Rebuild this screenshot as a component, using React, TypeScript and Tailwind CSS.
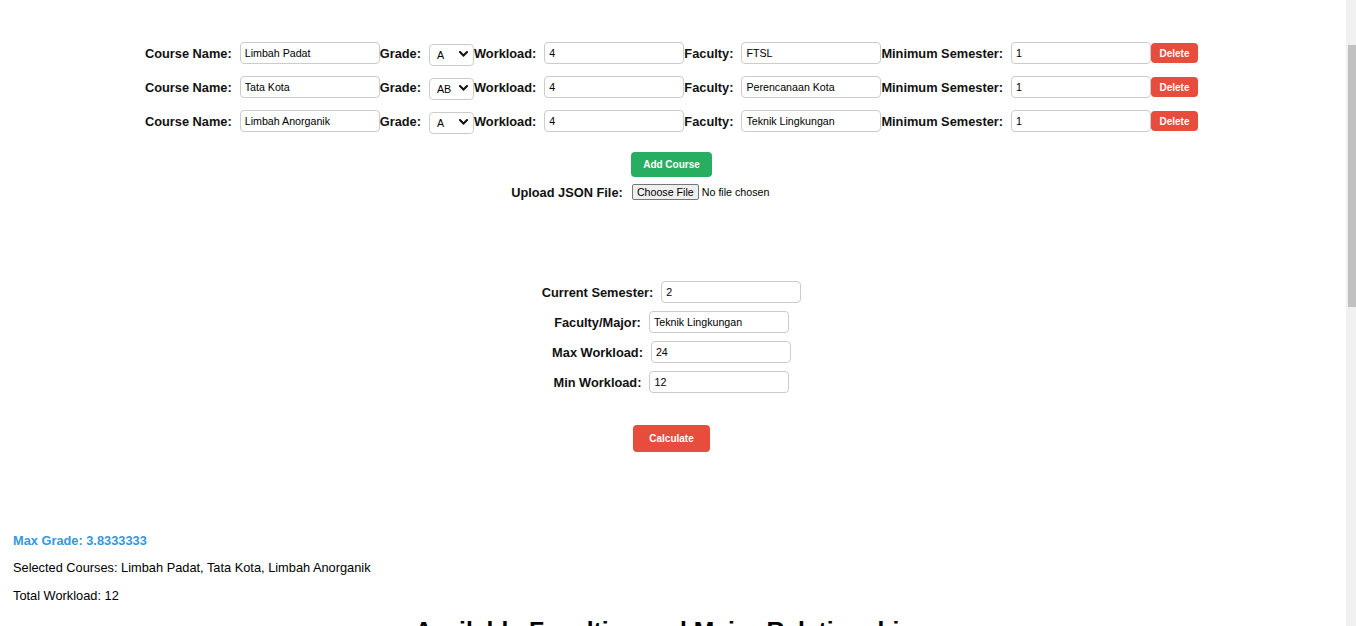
import React from "react";

const inputCls =
  "w-[140px] h-[22px] border border-[#cccccc] rounded-[4px] pl-[4px] text-[10.67px] text-black bg-white outline-none";

function Label({ children }: { children: React.ReactNode }) {
  return <label className="mr-2 text-[12.8px] font-bold text-[#111] whitespace-nowrap leading-[15px] -translate-y-[0.5px]">{children}</label>;
}

function GradeSelect({ value }: { value: string }) {
  return (
    <div className="relative w-[45px] h-[22px]">
      <select
        defaultValue={value}
        className="appearance-none w-[45px] h-[22px] border border-[#cccccc] rounded-[4px] pl-[7px] text-[10.67px] text-black bg-white outline-none"
      >
        {["A", "AB", "B", "BC", "C", "D", "E"].map((g) => (
          <option key={g} value={g}>
            {g}
          </option>
        ))}
      </select>
      <svg
        className="pointer-events-none absolute right-[6px] top-[9px]"
        width="9"
        height="6"
        viewBox="0 0 9 6"
      >
        <path d="M1 1 L4.5 4.5 L8 1" fill="none" stroke="#111" strokeWidth="2" strokeLinecap="square" />
      </svg>
    </div>
  );
}

const courses = [
  { name: "Limbah Padat", grade: "A", workload: "4", faculty: "FTSL", min: "1" },
  { name: "Tata Kota", grade: "AB", workload: "4", faculty: "Perencanaan Kota", min: "1" },
  { name: "Limbah Anorganik", grade: "A", workload: "4", faculty: "Teknik Lingkungan", min: "1" },
];

function CourseRow({ c }: { c: (typeof courses)[number] }) {
  return (
    <div className="flex items-center h-[22px]">
      <Label>Course Name:</Label>
      <input className={inputCls} defaultValue={c.name} />
      <Label>Grade:</Label>
      <GradeSelect value={c.grade} />
      <Label>Workload:</Label>
      <input className={inputCls} defaultValue={c.workload} />
      <Label>Faculty:</Label>
      <input className={inputCls} defaultValue={c.faculty} />
      <Label>Minimum Semester:</Label>
      <input className={inputCls} defaultValue={c.min} />
      <button className="w-[47px] h-[20px] bg-[#e74c3c] text-white text-[10px] font-bold rounded-[4px] flex items-center justify-center">
        Delete
      </button>
    </div>
  );
}

function FieldRow({ label, value }: { label: string; value: string }) {
  return (
    <div className="flex items-center h-[22px]">
      <Label>{label}</Label>
      <input className={inputCls} defaultValue={value} />
    </div>
  );
}

export default function App() {
  return (
    <div className="w-[1356px] h-[626px] flex overflow-hidden bg-white font-['Liberation_Sans',Arial,sans-serif] text-[#111]">
      <div className="flex-1 flex flex-col pr-[3px]">
        <div className="shrink-0 flex flex-col items-center gap-[12px] mt-[42px]">
          {courses.map((c, i) => (
            <CourseRow key={i} c={c} />
          ))}
        </div>
        <button className="shrink-0 self-center mt-[20px] w-[81px] h-[25px] bg-[#27ae60] text-white text-[10px] font-bold rounded-[4px] flex items-center justify-center">
          Add Course
        </button>
        <div className="shrink-0 self-center mt-[7px] h-[16px] flex items-center">
          <Label>Upload JSON File:</Label>
          <div className="w-[201px] flex items-center text-[10.67px] text-black">
            <span className="ml-[1px] w-[67px] h-[16px] border border-[#767676] bg-[#efefef] rounded-[2px] flex items-center justify-center">
              Choose File
            </span>
            <span className="ml-[3px]">No file chosen</span>
          </div>
        </div>
        <div className="shrink-0 flex flex-col items-center gap-[8px] mt-[81px]">
          <FieldRow label="Current Semester:" value="2" />
          <FieldRow label="Faculty/Major:" value="Teknik Lingkungan" />
          <FieldRow label="Max Workload:" value="24" />
          <FieldRow label="Min Workload:" value="12" />
        </div>
        <button className="shrink-0 self-center mt-[32px] w-[77px] h-[27px] bg-[#e74c3c] text-white text-[10px] font-bold rounded-[4px] flex items-center justify-center">
          Calculate
        </button>
        <div className="shrink-0 pl-[13px] mt-[80.5px] text-[12.8px] leading-[15px]">
          <p className="font-bold text-[#3498db]">Max Grade: 3.8333333</p>
          <p className="mt-[12px] text-black">Selected Courses: Limbah Padat, Tata Kota, Limbah Anorganik</p>
          <p className="mt-[13px] text-black">Total Workload: 12</p>
        </div>
        <h2 className="shrink-0 mt-[14px] text-center text-[24.7px] leading-[28px] font-bold text-black whitespace-nowrap">
          Available Faculties and Major Relationships
        </h2>
      </div>
      <div className="shrink-0 w-[10px] h-[626px] bg-[#f1f1f1] flex flex-col">
        <div className="shrink-0 ml-[2px] w-[8px] mt-[45px] h-[262px] bg-[#c1c1c1]" />
      </div>
    </div>
  );
}
